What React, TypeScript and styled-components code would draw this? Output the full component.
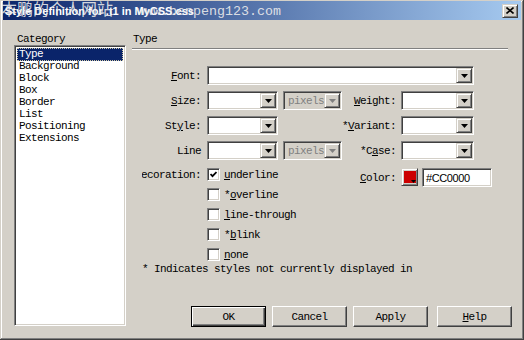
import styled, { createGlobalStyle, css } from "styled-components";

const GlobalStyle = createGlobalStyle`
  html, body { margin: 0; padding: 0; background: #D4D0C8; }
  body { width: 524px; height: 340px; overflow: hidden; }
`;

const sysFont = `"Liberation Mono", "Noto Sans CJK SC", monospace`;
const gridCols = "60px 71px 59px 49px 73px";

const categories = ["Type", "Background", "Block", "Box", "Border", "List", "Positioning", "Extensions"];

const Window = styled.div`
  position: relative;
  box-sizing: border-box;
  width: 524px;
  height: 340px;
  padding: 1px 3px 3px 3px;
  display: flex;
  flex-direction: column;
  background: #D4D0C8;
  box-shadow: inset -1px -1px #404040, inset 1px 1px #D4D0C8, inset -2px -2px #808080, inset 2px 2px #fff;
  font-family: ${sysFont};
  font-size: 11px;
  letter-spacing: -0.6px;
  line-height: 12px;
  color: #000;
  overflow: hidden;
`;

const TitleBar = styled.div`
  position: relative;
  height: 19px;
  display: flex;
  align-items: center;
  justify-content: space-between;
  padding: 0 3px 0 2px;
  background: linear-gradient(to right, #0A246A, #A6CAF0);
`;

const TitleText = styled.span`
  font: bold 11px "Liberation Sans", Arial, sans-serif;
  letter-spacing: 0;
  color: #fff;
`;

const Watermark = styled.div`
  position: absolute;
  left: -2px;
  top: -1px;
  display: flex;
  align-items: baseline;
  white-space: nowrap;
  color: rgba(236, 236, 236, 0.9);
  pointer-events: none;
`;

const WatermarkCjk = styled.span`
  font-family: "Noto Sans CJK SC", sans-serif;
  font-size: 16px;
  line-height: 16px;
  letter-spacing: 0;
`;

const WatermarkUrl = styled.span`
  margin-left: 24px;
  font-family: "Liberation Mono", monospace;
  font-size: 13.33px;
  letter-spacing: 0;
`;

const raised = css`
  box-sizing: border-box;
  background: #D4D0C8;
  border: 1px solid;
  border-color: #D4D0C8 #404040 #404040 #D4D0C8;
  box-shadow: inset 1px 1px #fff, inset -1px -1px #808080;
`;

const sunken = css`
  box-sizing: border-box;
  border: 1px solid;
  border-color: #808080 #fff #fff #808080;
  box-shadow: inset 1px 1px #404040, inset -1px -1px #D4D0C8;
`;

const CloseButton = styled.div`
  ${raised};
  width: 16px;
  height: 14px;
  display: flex;
  align-items: center;
  justify-content: center;
`;

const Body = styled.div`
  flex: 1;
  display: grid;
  grid-template-columns: 112px 1fr;
  column-gap: 6px;
  padding: 13px 9px 10px 11px;
`;

const Column = styled.div`
  display: flex;
  flex-direction: column;
  min-height: 0;
`;

const Heading = styled.div<{ $indent: number }>`
  height: 12px;
  padding-left: ${(p) => p.$indent}px;
`;

const ListBox = styled.div`
  ${sunken};
  flex: 1;
  margin-bottom: 1px;
  padding: 2px 2px 0 2px;
  background: #fff;
`;

const ListItem = styled.div<{ $selected?: boolean }>`
  height: 12px;
  padding-left: 2px;
  white-space: nowrap;
  ${(p) =>
    p.$selected &&
    css`
      background: #0A246A;
      color: #fff;
      outline: 1px dotted rgba(255, 240, 180, 0.8);
      outline-offset: -1px;
      height: 13px;
      margin-bottom: -1px;
    `}
`;

const Divider = styled.div`
  margin: 3px 4px 0 0;
  border-top: 1px solid #808080;
  border-bottom: 1px solid #fff;
`;

const Form = styled.div`
  margin-top: 16px;
  padding-left: 10px;
  display: flex;
  flex-direction: column;
`;

const FieldGrid = styled.div`
  display: grid;
  grid-template-columns: ${gridCols};
  grid-auto-rows: 19px;
  column-gap: 5px;
  row-gap: 6px;
`;

const DecorationGrid = styled.div`
  margin-top: 8px;
  display: grid;
  grid-template-columns: 60px 71px 59px 49px auto;
  column-gap: 5px;
  align-items: start;
`;

const Label = styled.div<{ $clip?: boolean; $h?: number }>`
  height: ${(p) => p.$h ?? 19}px;
  display: flex;
  align-items: center;
  justify-content: flex-end;
  padding-right: ${(p) => (p.$clip ? 1 : 0)}px;
  overflow: ${(p) => (p.$clip ? "hidden" : "visible")};
  white-space: nowrap;
  & > span {
    flex-shrink: 0;
  }
`;

const Combo = styled.div<{ $disabled?: boolean; $span?: string }>`
  ${sunken};
  grid-column: ${(p) => p.$span ?? "auto"};
  height: 19px;
  padding: 1px;
  display: flex;
  align-items: center;
  justify-content: space-between;
  background: ${(p) => (p.$disabled ? "#D4D0C8" : "#fff")};
  color: ${(p) => (p.$disabled ? "#808080" : "#000")};
`;

const ComboText = styled.span`
  padding-left: 3px;
  white-space: nowrap;
  overflow: hidden;
`;

const ArrowButton = styled.div`
  ${raised};
  flex-shrink: 0;
  width: 16px;
  height: 15px;
  display: flex;
  align-items: center;
  justify-content: center;
`;

const CheckList = styled.div`
  grid-column: 2 / 4;
  display: flex;
  flex-direction: column;
  gap: 7px;
`;

const CheckRow = styled.div`
  height: 13px;
  display: flex;
  align-items: center;
  gap: 4px;
  white-space: nowrap;
`;

const CheckBox = styled.div`
  ${sunken};
  width: 13px;
  height: 13px;
  background: #fff;
  display: flex;
  align-items: center;
  justify-content: center;
`;

const ColorGroup = styled.div`
  display: flex;
  gap: 4px;
`;

const ColorButton = styled.div`
  ${raised};
  position: relative;
  width: 17px;
  height: 18px;
  padding: 1px;
`;

const Swatch = styled.div<{ $color: string }>`
  width: 12px;
  height: 12px;
  margin: 1px 0 0 1px;
  background: ${(p) => p.$color};
`;

const SwatchArrow = styled.svg`
  position: absolute;
  right: 1px;
  bottom: 2px;
`;

const ColorInput = styled.div`
  ${sunken};
  width: 70px;
  height: 19px;
  padding: 0 3px;
  display: flex;
  align-items: center;
  background: #fff;
  font: 11px "Liberation Sans", Arial, sans-serif;
  letter-spacing: -0.4px;
`;

const Note = styled.div`
  margin-top: 2px;
  height: 12px;
  white-space: nowrap;
`;

const ButtonRow = styled.div`
  margin-top: auto;
  display: flex;
  justify-content: flex-end;
  gap: 6px;
`;

const PushButton = styled.div<{ $default?: boolean; $gapLeft?: number }>`
  box-sizing: border-box;
  width: 75px;
  height: 21px;
  margin-left: ${(p) => p.$gapLeft ?? 0}px;
  display: flex;
  align-items: center;
  justify-content: center;
  background: #D4D0C8;
  border: 1px solid;
  border-color: #fff #404040 #404040 #fff;
  box-shadow: inset -1px -1px #808080;
  ${(p) =>
    p.$default &&
    css`
      border-color: #000;
      box-shadow: inset 1px 1px #fff, inset -1px -1px #404040, inset -2px -2px #808080;
    `}
`;

function DownArrow({ color = "#000" }: { color?: string }) {
  return (
    <svg width="7" height="4" viewBox="0 0 7 4">
      <path d="M0 0h7L3.5 4z" fill={color} />
    </svg>
  );
}

function Select({ value, disabled, span }: { value?: string; disabled?: boolean; span?: string }) {
  return (
    <Combo $disabled={disabled} $span={span}>
      <ComboText>{value}</ComboText>
      <ArrowButton>
        <DownArrow color={disabled ? "#808080" : "#000"} />
      </ArrowButton>
    </Combo>
  );
}

function Check({ checked, children }: { checked?: boolean; children: React.ReactNode }) {
  return (
    <CheckRow>
      <CheckBox>
        {checked && (
          <svg width="7" height="7" viewBox="0 0 7 7">
            <polyline points="0.5,3 2.5,5.2 6.5,1" fill="none" stroke="#000" strokeWidth="1.8" />
          </svg>
        )}
      </CheckBox>
      <span>{children}</span>
    </CheckRow>
  );
}

export default function App() {
  return (
    <>
      <GlobalStyle />
      <Window>
        <TitleBar>
          <TitleText>Style Definition for .t1 in MyCSS.css</TitleText>
          <CloseButton>
            <svg width="8" height="7" viewBox="0 0 8 7">
              <path d="M0.5 0.5l7 6M7.5 0.5l-7 6" stroke="#000" strokeWidth="1.6" />
            </svg>
          </CloseButton>
          <Watermark>
            <WatermarkCjk>本鹏的个人网站</WatermarkCjk>
            <WatermarkUrl>www.benpeng123.com</WatermarkUrl>
          </Watermark>
        </TitleBar>
        <Body>
          <Column>
            <Heading $indent={3}>Category</Heading>
            <ListBox>
              {categories.map((c, i) => (
                <ListItem key={c} $selected={i === 0}>
                  {c}
                </ListItem>
              ))}
            </ListBox>
          </Column>
          <Column>
            <Heading $indent={1}>Type</Heading>
            <Divider />
            <Form>
              <FieldGrid>
                <Label $clip>
                  <span><u>F</u>ont:</span>
                </Label>
                <Select span="2 / -1" />

                <Label $clip>
                  <span><u>S</u>ize:</span>
                </Label>
                <Select />
                <Select value="pixels" disabled />
                <Label>
                  <span><u>W</u>eight:</span>
                </Label>
                <Select />

                <Label $clip>
                  <span>St<u>y</u>le:</span>
                </Label>
                <Select />
                <div />
                <Label>
                  <span>*<u>V</u>ariant:</span>
                </Label>
                <Select />

                <Label $clip>
                  <span>Line</span>
                </Label>
                <Select />
                <Select value="pixels" disabled />
                <Label>
                  <span>*C<u>a</u>se:</span>
                </Label>
                <Select />
              </FieldGrid>

              <DecorationGrid>
                <Label $clip $h={13}>
                  <span>Decoration:</span>
                </Label>
                <CheckList>
                  <Check checked><u>u</u>nderline</Check>
                  <Check>*<u>o</u>verline</Check>
                  <Check><u>l</u>ine-through</Check>
                  <Check>*<u>b</u>link</Check>
                  <Check><u>n</u>one</Check>
                </CheckList>
                <Label>
                  <span><u>C</u>olor:</span>
                </Label>
                <ColorGroup>
                  <ColorButton>
                    <Swatch $color="#CC0000" />
                    <SwatchArrow width="5" height="3" viewBox="0 0 5 3">
                      <path d="M0 0h5L2.5 3z" fill="#000" />
                    </SwatchArrow>
                  </ColorButton>
                  <ColorInput>#CC0000</ColorInput>
                </ColorGroup>
              </DecorationGrid>

              <Note>* Indicates styles not currently displayed in</Note>
            </Form>
            <ButtonRow>
              <PushButton $default>OK</PushButton>
              <PushButton>Cancel</PushButton>
              <PushButton>Apply</PushButton>
              <PushButton $gapLeft={3}>
                <span><u>H</u>elp</span>
              </PushButton>
            </ButtonRow>
          </Column>
        </Body>
      </Window>
    </>
  );
}
